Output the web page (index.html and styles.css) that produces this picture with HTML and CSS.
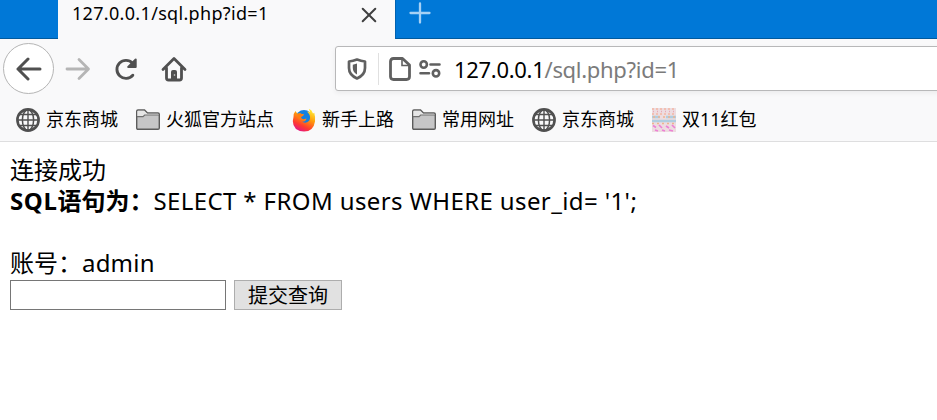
FILE: index.html
```html
<!DOCTYPE html>
<html lang="zh-CN">
<head>
<meta charset="utf-8">
<title>127.0.0.1/sql.php?id=1</title>
<link rel="stylesheet" href="styles.css">
</head>
<body>
<svg class="defs" aria-hidden="true">
  <symbol id="globe" viewBox="0 0 24 24"><g fill="none" stroke="#505050"><circle cx="12" cy="12" r="10.6" stroke-width="2.6"/><ellipse cx="12" cy="12" rx="5.6" ry="10.3" stroke-width="1.5"/><path d="M12 1.500v21M1.500 12h21M4 6.500h16M4 17.500h16" stroke-width="1.400"/></g></symbol>
  <symbol id="folder" viewBox="0 0 24 24"><path d="M.7 20V3.200Q.7 2 2 2h6.500l3 3H22q1.300 0 1.300 1.300V20q0 1.300-1.300 1.300H2Q.7 21.300 .7 20z" fill="#c6c6c7" stroke="#5c5c5c" stroke-width="1.400"/><path d="M1.400 3.200q0-.5.6-.5h6.200l3 3H22q.6 0 .6.6V7H8.500L7 8.500H1.400z" fill="#e6e6e6"/><path d="M1 8.700h6L8.700 7H23" fill="none" stroke="#707070" stroke-width="1.200"/></symbol>
</svg>
<header>
  <div class="tabs">
    <div class="tab"><span>127.0.0.1/sql.php?id=1</span>
      <svg class="close" width="16" height="16" viewBox="0 0 16 16"><path d="M1.700 1.700l12.600 12.600M14.300 1.700L1.700 14.300" stroke="#404040" stroke-width="2" stroke-linecap="round"/></svg>
    </div>
    <div class="rest"><svg width="22" height="22" viewBox="0 0 22 22"><path d="M11 1.500v19M1.500 11h19" stroke="#a6d1f5" stroke-width="2.300" stroke-linecap="round"/></svg></div>
  </div>
  <nav class="toolbar">
    <div class="back"><svg width="26" height="24" viewBox="0 0 26 24"><path d="M24 12H2M12 2L2 12l10 10" fill="none" stroke="#505050" stroke-width="3" stroke-linecap="round" stroke-linejoin="round"/></svg></div>
    <svg class="forward" width="26" height="24" viewBox="0 0 26 24"><path d="M2 12h21M14 2.500l9.500 9.500-9.500 9.500" fill="none" stroke="#b5b5b5" stroke-width="2.800" stroke-linecap="round" stroke-linejoin="round"/></svg>
    <svg class="reload" width="24" height="24" viewBox="0 0 24 24"><path d="M18.800 18.200A9 9 0 1 1 18.500 6.200" fill="none" stroke="#505050" stroke-width="2.900" stroke-linecap="round"/><path d="M21.700 2.500V10h-7.500z" fill="#505050" stroke="#505050" stroke-width="2" stroke-linejoin="round"/></svg>
    <svg class="home" width="26" height="26" viewBox="0 0 26 26"><path d="M2 13.500L13 2.500l11 11M5.500 12v10q0 2 2 2h11q2 0 2-2V12" fill="none" stroke="#505050" stroke-width="2.800" stroke-linecap="round" stroke-linejoin="round"/><path d="M10 24v-8q0-2 2-2h2q2 0 2 2v8z" fill="#505050"/><circle cx="13.500" cy="19" r=".8" fill="#ddd"/></svg>
    <div class="address">
      <svg class="shield" width="20" height="22" viewBox="0 0 20 22"><path d="M10 1.600Q14 3.200 18 3.500V10q0 7-8 10.400Q2 17 2 10V3.500q4-.3 8-1.900z" fill="none" stroke="#606060" stroke-width="2.700" stroke-linejoin="round"/><path d="M10 5.500v11Q5.800 14 5.800 10V6.700z" fill="#606060"/></svg>
      <i class="divider"></i>
      <svg class="page" width="22" height="24" viewBox="0 0 22 24"><path d="M4.500 1.500h9L20.500 8v11.500q0 3-3 3h-13q-3 0-3-3v-15q0-3 3-3z" fill="none" stroke="#606060" stroke-width="2.800" stroke-linejoin="round"/><path d="M13 2v6.500h7" fill="none" stroke="#606060" stroke-width="1.600"/></svg>
      <svg class="perms" width="22" height="18" viewBox="0 0 22 18"><g fill="none" stroke="#606060" stroke-width="2.600"><circle cx="4.700" cy="4.500" r="3.200"/><circle cx="17" cy="13.300" r="3.200"/><path d="M11.500 4.500h9M1.500 13.300h8.500" stroke-linecap="round"/></g></svg>
      <span class="url"><b>127.0.0.1</b>/sql.php?id=1</span>
    </div>
  </nav>
  <div class="bookmarks">
    <a><svg><use href="#globe"/></svg>京东商城</a>
    <a><svg><use href="#folder"/></svg>火狐官方站点</a>
    <a><svg viewBox="0 0 24 24"><defs><linearGradient id="fire" x1=".8" y1="0" x2=".3" y2="1"><stop offset="0" stop-color="#fff23b"/><stop offset=".4" stop-color="#ff9d0a"/><stop offset=".75" stop-color="#ff3b2f"/><stop offset="1" stop-color="#e31587"/></linearGradient></defs><circle cx="12" cy="10.500" r="8.500" fill="#1480df"/><path d="M1.500 9Q1.500 5 3.500 3l1.800 2.700q2.500-.8 4.500.3l2 .3q-.2 1.800-2.800 2.500 0 2.500 3 2.400l2.500-.7q-1 3.500-4.500 3.200 5 2.500 7.500-1.500Q19.500 8 15 3.500 17.500 3.500 18 4.500L17 .800q3 1.200 4 4.700l1.300-.8Q23.500 9 23 13.500 21.500 23.500 12 23.500 1 23 .8 13z" fill="url(#fire)"/><path d="M5.500 6Q8 5 9.800 6l2 .4q-.3 1.700-2.800 2.400-2 2 1 3.500-4.500-.5-4.500-6.300z" fill="#ff7d14"/></svg>新手上路</a>
    <a><svg><use href="#folder"/></svg>常用网址</a>
    <a><svg><use href="#globe"/></svg>京东商城</a>
    <a><svg viewBox="0 0 24 24"><path fill="#eddce0" d="M0 0h24v24H0z"/><path d="M0 1h24M0 6h24" stroke="#f3b7a4" stroke-width="1.500" stroke-dasharray="2 2"/><path d="M1 3.500h24" stroke="#e9a8b6" stroke-width="1.500" stroke-dasharray="1 3"/><path d="M0 9h8M14 9h10M0 13h24" stroke="#b0cee0" stroke-width="2.600"/><path d="M1 9h24M0 15.500h24" stroke="#efb48e" stroke-width="1.500" stroke-dasharray="2 3"/><path d="M1 17.500l3 2M7 17l3 3M14 18l3 2M20 17l3 3M3 22l3 1M10 22l3 1M17 22l4 1" stroke="#ec82d4" stroke-width="1.700"/></svg>双11红包</a>
  </div>
</header>
<main>
  <div>连接成功</div>
  <div><strong><span class="bold-latin">SQL</span>语句为：</strong><span class="sql">SELECT * FROM users WHERE user_id= '1';</span></div>
  <br>
  <div>账号：<span class="admin">admin</span></div>
  <form><input type="text"><button type="button">提交查询</button></form>
</main>
</body>
</html>
```
FILE: styles.css
```css
* { box-sizing: border-box; }
body { margin: 0; height: 420px; overflow: hidden; background: #fff; color: #000; font-family: "Noto Sans", "Noto Sans CJK SC", sans-serif; }
svg { display: block; flex: none; }
.defs { position: absolute; width: 0; height: 0; }
header { height: 142px; background: #f9f9fa; border-bottom: 1px solid #dededf; }
.tabs { display: flex; height: 39px; padding-left: 58px; background: linear-gradient(#0078d7 38px, #005a9e 38px); }
.tab { display: flex; width: 337px; background: #f9f9fa; padding-left: 14px; font-size: 18px; line-height: 26px; }
.tab span { width: 289px; white-space: nowrap; letter-spacing: .32px; }
.close { margin-top: 7px; }
.rest { padding: 2px 0 0 13px; border-left: 1px solid #0062b1; }
.toolbar { display: flex; align-items: center; height: 59px; padding-left: 3px; }
.back { display: flex; align-items: center; justify-content: center; width: 51px; height: 51px; border: 1px solid #b5b5b5; border-radius: 50%; background: #fff; }
.forward { margin-left: 11px; }
.reload { margin-left: 23px; }
.home { margin-left: 23px; }
.address { display: flex; align-items: center; flex: 1; height: 45px; margin: 0 -4px 0 148px; padding-left: 11px; border: 1px solid #b8b8b9; border-radius: 3px; background: #fff; box-shadow: 0 2px 5px rgba(0,0,0,.06); }
.divider { width: 1px; height: 32px; margin-left: 11px; background: #e0e0e0; }
.page { margin-left: 10px; }
.perms { margin-left: 8px; }
.url { margin-left: 13px; color: #7b7b7b; font-size: 22px; letter-spacing: -.3px; white-space: nowrap; }
.url b { color: #000; font-weight: 400; }
.bookmarks { display: flex; align-items: center; gap: 18px; height: 43px; padding: 0 0 1px 16px; font-size: 18px; line-height: 26px; }
.bookmarks a { display: flex; align-items: center; gap: 6px; white-space: nowrap; }
.bookmarks svg { width: 24px; height: 24px; margin-top: 1px; }
main { padding: 12px 10px; font-size: 24px; line-height: 31px; white-space: nowrap; }
.sql { letter-spacing: .39px; }
.bold-latin { letter-spacing: .6px; }
.admin { letter-spacing: .2px; }
form { display: flex; gap: 8px; margin-top: 2px; }
input { width: 216px; height: 30px; margin: 0; border: 1px solid #767676; background: #fff; }
button { width: 108px; height: 30px; padding: 0; border: 1px solid #adadad; background: #e1e1e1; color: #000; font: 20px/26px "Noto Sans CJK SC", sans-serif; }
```
